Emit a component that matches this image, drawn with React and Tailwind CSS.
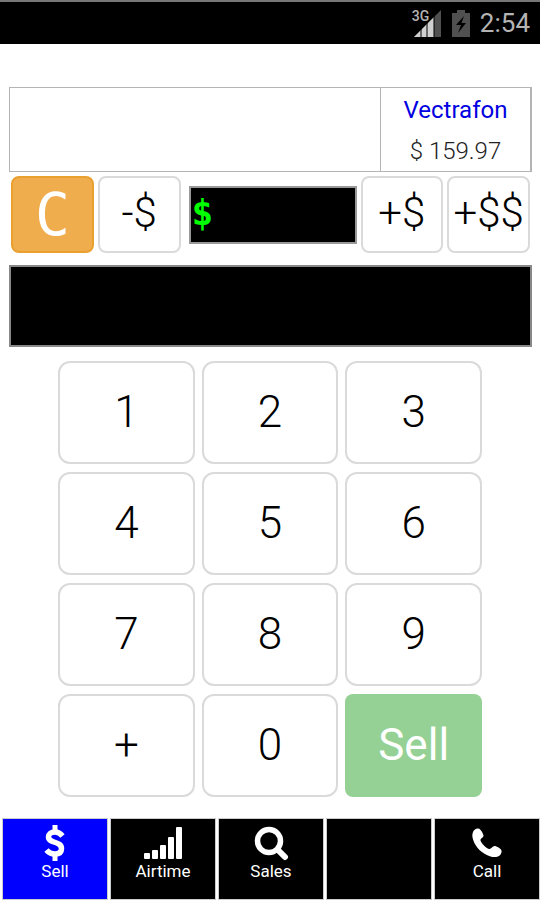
import React, { useState } from 'react';

const CellSignalIcon = () => (
    <svg width="30" height="30" viewBox="0 0 30 30" aria-hidden="true">
        <path d="M2 29 L29 2 V29 Z" fill="#505050" />
        <path d="M2 29 L22 9 V29 Z" fill="#d0d0d0" />
        <path d="M9 18V29M15 12V29M22 6V29" stroke="#000" strokeWidth="1" />
        <path d="M0 0H17V13H0Z" fill="#000" />
    </svg>
);

const BatteryIcon = () => (
    <svg width="18" height="27" viewBox="0 0 18 27" aria-hidden="true">
        <path d="M5 0H13V3H18V27H0V3H5Z" fill="#505050" />
        <path d="M12 6 L4 15 H9 L6 23 L14 13 H9.500 Z" fill="#000" />
    </svg>
);

const DollarIcon = () => (
    <svg width="22" height="36" viewBox="0 0 22 36" fill="none" stroke="currentColor" aria-hidden="true">
        <path d="M11 0V7M11 28V36" strokeWidth="5" />
        <path d="M18.500 11C16.500 8.500 14 7 11 7C7 7 4.500 9 4.500 12C4.500 18.500 17.500 16 17.500 23.500C17.500 27.500 15 29 11 29C7.500 29 4.500 27.500 2.500 25" strokeWidth="5.500" />
    </svg>
);

const SignalIcon = () => (
    <svg width="38" height="32" viewBox="0 0 38 32" fill="currentColor" aria-hidden="true">
        <rect x="0" y="26" width="6" height="6" rx="1" />
        <rect x="8" y="23" width="6" height="9" rx="1" />
        <rect x="16" y="18" width="6" height="14" rx="1" />
        <rect x="24" y="10" width="6" height="22" rx="1" />
        <rect x="32" y="0" width="6" height="32" rx="1" />
    </svg>
);

const SearchIcon = () => (
    <svg width="36" height="36" viewBox="0 0 36 36" fill="none" stroke="currentColor" aria-hidden="true">
        <circle cx="16" cy="16" r="11.500" strokeWidth="5.500" />
        <path d="M25 25L32 32" strokeWidth="6" strokeLinecap="round" />
    </svg>
);

const PhoneIcon = () => (
    <svg width="30" height="30" viewBox="0 0 30 30" fill="currentColor" aria-hidden="true">
        <path d="M1 4C2 1.500 4.500 0 6.500 0.500C8.500 1 11 5 11.500 7.500C11.800 9.500 8 10.500 8.500 12.500C9.500 15.500 14 20 17 21C19 21.500 20.500 18 22.500 18C24.500 18 29 20.500 29.500 22.500C30 24.500 28.500 27.500 26 28.500C23.500 29.300 21 29.300 18.500 28.500C10 25.500 4 20 1.200 12C0.200 9 0 6.500 1 4Z" />
    </svg>
);

const tabs = [
    { id: 'sell', label: 'Sell', Icon: DollarIcon },
    { id: 'airtime', label: 'Airtime', Icon: SignalIcon },
    { id: 'sales', label: 'Sales', Icon: SearchIcon },
    { id: 'blank', label: '', Icon: null },
    { id: 'call', label: 'Call', Icon: PhoneIcon },
];

const keys = ['1', '2', '3', '4', '5', '6', '7', '8', '9', '+', '0'];

const StatusBar = () => (
    <header className="flex h-11 items-center justify-end gap-2.5 border-t-2 border-[#777] bg-black pr-2.5 text-[#b4b4b4]">
        <div className="relative">
            <CellSignalIcon />
            <span className="absolute left-0 top-0 text-sm leading-4 font-medium">3G</span>
        </div>
        <BatteryIcon />
        <span className="text-[26px] leading-8">2:54</span>
    </header>
);

const AmountButton = ({ label, onClick }) => (
    <button
        type="button"
        onClick={onClick}
        className="flex h-[77px] min-w-0 flex-1 justify-center rounded-lg border-2 border-[#dadada] bg-white text-[42px] leading-[70px] font-light whitespace-nowrap"
    >
        {label}
    </button>
);

export default function App() {
    const [amount, setAmount] = useState('');
    const [activeTab, setActiveTab] = useState('sell');

    const addToAmount = (value) => {
        setAmount(prev => String(Math.max(0, Number(prev || 0) + value)));
    };

    return (
        <div className="flex min-h-screen flex-col bg-white font-['Roboto',sans-serif] text-black">
            <StatusBar />

            <main className="flex-1 pt-[43px] pr-2 pl-[9px]">
                <section className="flex h-[85px] border border-r-2 border-[#b4b4b4]">
                    <div className="flex-1" />
                    <div className="flex w-[150px] flex-col items-center border-l border-[#b4b4b4] text-2xl font-light">
                        <a href="#vectrafon" className="leading-[44px] font-normal text-[#0000e0]">Vectrafon</a>
                        <span className="leading-[38px] text-[#222]">$ 159.97</span>
                    </div>
                </section>

                <section className="flex items-center gap-1 px-0.5 pt-1">
                    <button
                        type="button"
                        onClick={() => setAmount('')}
                        className="h-[77px] min-w-0 flex-1 rounded-lg border-2 border-[#e9a02f] bg-[#f0ad4e] font-['DejaVu_Sans_Mono',monospace] text-[58px] leading-[72px] text-white"
                    >
                        C
                    </button>
                    <AmountButton label="-$" onClick={() => addToAmount(-1)} />
                    <label className="ml-1 flex h-[58px] w-[168px] items-center border-2 border-[#999] bg-black font-['DejaVu_Sans_Mono',monospace] text-4xl leading-[54px] font-bold text-[#00ff00]">
                        <span className="pb-1 pl-px leading-[50px]">$</span>
                        <input
                            aria-label="Amount"
                            value={amount}
                            onChange={(e) => setAmount(e.target.value)}
                            className="w-full min-w-0 bg-black outline-none"
                        />
                    </label>
                    <AmountButton label="+$" onClick={() => addToAmount(1)} />
                    <AmountButton label="+$$" onClick={() => addToAmount(10)} />
                </section>

                <output className="mt-3 block h-[82px] border-2 border-[#888] bg-black" />

                <section className="mr-[50px] ml-[49px] mt-3.5 grid grid-cols-3 gap-x-[7px] gap-y-2">
                    {keys.map(key => (
                        <button
                            key={key}
                            type="button"
                            onClick={() => setAmount(prev => prev + key)}
                            className="h-[103px] rounded-xl border-2 border-[#dadada] bg-white text-[44px] leading-[99px] font-light"
                        >
                            {key}
                        </button>
                    ))}
                    <button type="button" className="h-[103px] rounded-lg bg-[#95d195] text-[44px] leading-[103px] text-white">
                        Sell
                    </button>
                </section>
            </main>

            <nav className="mt-5 grid grid-cols-5 gap-0.5 pl-0.5">
                {tabs.map(({ id, label, Icon }) => (
                    <button
                        key={id}
                        type="button"
                        aria-label={label || 'Empty'}
                        onClick={() => setActiveTab(id)}
                        className={`flex h-[82px] flex-col items-center border border-[#ccc] pt-1.5 text-[17px] leading-5 text-white ${activeTab === id ? 'bg-[#0000ff]' : 'bg-black'}`}
                    >
                        <span className="flex h-9 items-center justify-center">{Icon && <Icon />}</span>
                        {label}
                    </button>
                ))}
            </nav>
        </div>
    );
}
